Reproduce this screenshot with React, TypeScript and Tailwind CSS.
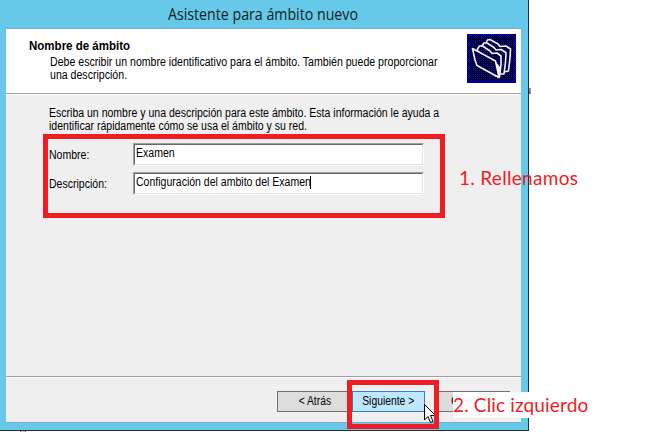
const dialogText = 'font-["Liberation_Sans",Arial,sans-serif] text-[12px] leading-[13px] text-black whitespace-nowrap';
const condensed = 'inline-block origin-left scale-x-[0.877]';

function FoldersIcon() {
  return (
    <svg width="49" height="49" viewBox="0 0 49 49" className="block shrink-0" shapeRendering="crispEdges">
      <defs>
        <pattern id="dither" width="2" height="2" patternUnits="userSpaceOnUse">
          <rect width="2" height="2" fill="#000010" />
          <rect width="1" height="1" fill="#0000ff" />
        </pattern>
        <pattern id="edge" width="2" height="2" patternUnits="userSpaceOnUse">
          <rect width="2" height="2" fill="#000018" />
          <rect width="1" height="1" fill="#0000ff" />
          <rect x="1" y="1" width="1" height="1" fill="#0000ff" />
        </pattern>
      </defs>
      <rect width="49" height="49" fill="url(#edge)" />
      <rect x="3" y="3" width="43" height="43" fill="url(#dither)" />
      <g fill="url(#dither)" stroke="#f4f4f4" strokeWidth="1.6" strokeLinejoin="round" shapeRendering="auto">
        <path d="M19 9 L20.5 6 L23 5.5 L31 10 L33 12.5 L39 12 L43.5 15 L43 24 L41.5 37 L37 38 L20 27Z" />
        <path d="M15 12 L17 9 L20 9 L27 13.5 L29 16 L34 15.5 L39 18.5 L38.5 28 L37 40 L33 40 L16 30Z" />
        <path d="M10.500 15 L12.500 12 L15.500 12 L23 17 L25 19.500 L30 19 L34 22 L34 31 L32.500 43 L29 42 L11 30Z" />
        <path d="M5.500 14.500 L28.500 27 L32 43.500 L10 31.500 L8 26Z" />
      </g>
      <path d="M29 28 L34 34 L32 43.500Z" fill="#f4f4f4" shapeRendering="auto" />
    </svg>
  );
}

function Field({ label, value, focused = false }: { label: string; value: string; focused?: boolean }) {
  return (
    <div className="flex h-[23px] w-[375px]">
      <div className={`w-[84px] pt-[6px] ${dialogText}`}><span className={condensed}>{label}</span></div>
      <div className="h-[23px] w-[291px] border border-t-[#a0a0a0] border-l-[#a0a0a0] border-r-white border-b-white">
        <div className="flex h-[21px] border border-t-[#696969] border-l-[#696969] border-r-[#e3e3e3] border-b-[#e3e3e3] bg-white pl-px pt-[2px]">
          <span className={`${dialogText} ${condensed}`}>{value}</span>
          {focused && <span className="-ml-[25px] h-[13px] w-px bg-black" />}
        </div>
      </div>
    </div>
  );
}

export default function App() {
  return (
    <main className="relative h-[432px] w-[653px] overflow-hidden bg-white">
      <span className="absolute left-[525px] top-[84px] font-['Liberation_Sans',sans-serif] text-[11px] leading-[13px] text-[#330033]">u</span>
      <section className="relative flex h-[431px] w-[529px] flex-col border-r border-b border-[#2b2b38] bg-[#66c9e9] pl-[6px] pr-[7px]">
        <header className="h-[28px] pl-[162px] pt-[2px]">
          <h1 className="inline-block origin-left scale-x-[0.915] whitespace-nowrap font-['Open_Sans','Noto_Sans',sans-serif] text-[15.500px] leading-[22px] text-[#101c22]">Asistente para ámbito nuevo</h1>
        </header>
        <div className="flex h-[395px] flex-col border-t border-b border-[#7badc9] bg-[#efefef]">
          <div className="flex h-[65px] justify-between border-b border-[#a0a0a0] bg-white pl-[23px] pr-[5px] pt-[5px]">
            <div className="w-[430px] pt-[6px]">
              <h2 className={`${dialogText} origin-left scale-x-[0.96] font-bold`}>Nombre de ámbito</h2>
              <div className={`pl-[21px] pt-[3px] ${dialogText}`}><p className="inline-block origin-left scale-x-[0.882]">Debe escribir un nombre identificativo para el ámbito. También puede proporcionar<br />una descripción.</p></div>
            </div>
            <FoldersIcon />
          </div>
          <div className="h-[283px] border-t border-b border-t-white border-b-[#a0a0a0] pl-[43px] pt-[12px]">
            <div className={`h-[26px] ${dialogText}`}><p className={condensed}>Escriba un nombre y una descripción para este ámbito. Esta información le ayuda a<br />identificar rápidamente cómo se usa el ámbito y su red.</p></div>
            <div className="mt-[10px] flex flex-col gap-[6px]">
              <Field label="Nombre:" value="Examen" />
              <Field label="Descripción:" value="Configuración del ambito del Examen" focused />
            </div>
          </div>
          <footer className="flex flex-1 border-t border-white pl-[271px] pt-[13px]">
            <button className={`h-[21px] w-[75px] border border-[#707070] bg-[#dddddd] ${dialogText}`}><span className="inline-block scale-x-[0.86]">&lt; Atrás</span></button>
            <button className={`h-[21px] w-[73px] border border-[#3c7fb1] bg-[#bee6fd] ${dialogText}`}><span className="inline-block scale-x-[0.86]">Siguiente &gt;</span></button>
            <button className={`ml-[10px] h-[21px] w-[75px] border border-[#707070] bg-[#dddddd] pl-[15px] text-left ${dialogText}`}>C</button>
          </footer>
        </div>
      </section>
      <svg className="absolute left-[424px] top-[404px]" width="13" height="20" viewBox="0 0 13 20">
        <path d="M.5 .5 V16 L4 12.500 L6.500 18.500 L9 17.500 L6.500 11.500 H11.500Z" fill="white" stroke="black" />
      </svg>
      <div className="absolute left-[43px] top-[134px] h-[84px] w-[402px] border-[5px] border-[#ee1c24]" />
      <div className="absolute left-[347px] top-[380px] h-[49px] w-[92px] border-[5px] border-[#ee1c24]" />
      <span className="absolute left-[459px] top-[165px] whitespace-nowrap font-['Lato',sans-serif] text-[19px] leading-[26px] tracking-[0.300px] text-[#ee1c24]">1. Rellenamos</span>
      <span className="absolute left-[453px] top-[392px] h-[26px] w-[140px] whitespace-nowrap bg-white font-['Lato',sans-serif] text-[19px] leading-[26px] tracking-[0.150px] text-[#ee1c24]">2. Clic izquierdo</span>
      <i className="absolute left-[20px] top-[431px] h-px w-[6px] border-x border-[#777777] bg-[#cccccc]" />
    </main>
  );
}
